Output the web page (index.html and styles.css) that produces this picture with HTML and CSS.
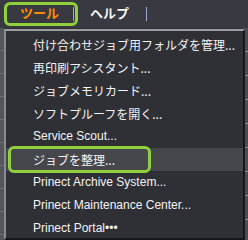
FILE: index.html
```html
<!DOCTYPE html>
<html lang="ja">

<head>
  <title>ツール</title>
  <link rel="stylesheet" href="styles.css">
</head>

<body>
  <header class="menubar">
    <div class="menu-item active">ツール<span class="sep"></span></div>
    <div class="menu-item">ヘルプ</div>
    <span class="sep"></span>
  </header>
  <main class="workspace">
    <div class="grid-left"></div>
    <div class="grid-right"></div>

    <ul class="dropdown">
      <li>付け合わせジョブ用フォルダを管理...</li>
      <li>再印刷アシスタント...</li>
      <li>ジョブメモリカード...</li>
      <li>ソフトプルーフを開く...</li>
      <li class="latin">Service Scout...</li>
      <li class="hover"><span class="mark">ジョブを整理...</span></li>
      <li class="latin">Prinect Archive System...</li>
      <li class="latin">Prinect Maintenance Center...</li>
      <li class="latin">Prinect Portal•••</li>
    </ul>
  </main>
</body>

</html>
```

FILE: styles.css
```css
body {
  margin: 0;
  width: 248px;
  height: 240px;
  overflow: hidden;
  background-color: #2f3036;
  font-family: "Liberation Sans", "Noto Sans CJK JP", sans-serif;
  color: #f4f4f4;
}

.menubar {
  height: 28px;
  background-color: #393a41;
  display: flex;
  align-items: center;
}

.menu-item {
  font-size: 13px;
  font-weight: bold;
  line-height: 18px;
  margin-left: 12px;
  margin-right: 17px;
}

.menu-item.active {
  color: #ff8a00;
  box-sizing: border-box;
  width: 74px;
  height: 24px;
  margin: 0 0 0 4px;
  padding: 0 1px 0 13px;
  border: 3px solid #8fd13a;
  border-radius: 6px;
  display: flex;
  align-items: center;
  justify-content: space-between;
}

.sep {
  width: 1px;
  height: 14px;
  background-color: #9aa6d8;
}

.workspace {
  position: relative;
  height: 212px;
  background-color: #2f3036;
}

.grid-left {
  position: absolute;
  left: 0;
  top: 0;
  width: 4px;
  height: 212px;
  background: repeating-linear-gradient(#55565c 0 22px, #6e6f75 22px 23px);
}

.grid-right {
  position: absolute;
  right: 0;
  top: 0;
  width: 5px;
  height: 212px;
  background: repeating-linear-gradient(#4c4d53 0 23px, #8a8b91 23px 24px);
}

.dropdown {
  list-style: none;
  margin: 0;
  padding: 2px 0 0 0;
  position: absolute;
  left: 4px;
  top: 1px;
  width: 237px;
  height: 205px;
  background-color: #2f3036;
  border-top: 2px solid #9d9ea3;
  border-left: 2px solid #8a8b90;
  border-right: 2px solid #16171a;
  border-bottom: 2px solid #16171a;
}

.dropdown li {
  height: 23px;
  line-height: 23px;
  padding-left: 27px;
  font-size: 12px;
  white-space: nowrap;
  font-family: "Noto Sans CJK JP", sans-serif;
}

.dropdown li.latin {
  font-family: "Liberation Sans", sans-serif;
  font-size: 12px;
}

.dropdown li.hover {
  background-color: #46474d;
  position: relative;
}

.mark::before {
  content: "";
  position: absolute;
  left: 2px;
  top: -2px;
  width: 137px;
  height: 21px;
  border: 3px solid #8fd13a;
  border-radius: 6px;
}
```
